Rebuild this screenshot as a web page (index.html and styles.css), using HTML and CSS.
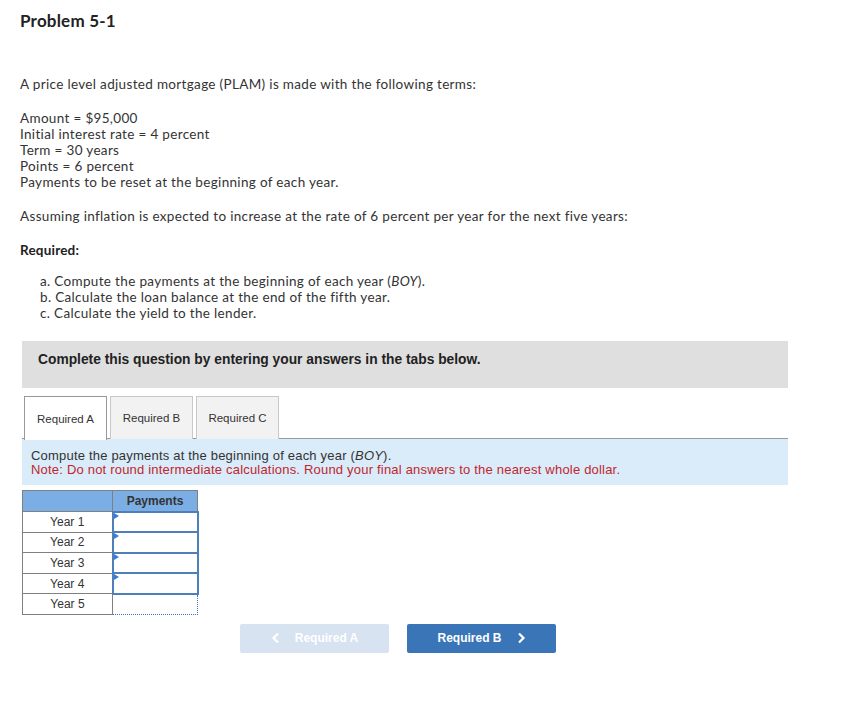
FILE: index.html
```html
<!DOCTYPE html>
<html lang="en">
<head>
  <meta charset="UTF-8" />
  <title>Problem 5-1</title>
  <link rel="stylesheet" href="styles.css">
</head>
<body>

<div class="page">
  <h1 class="title">Problem 5-1</h1>

  <p class="text">A price level adjusted mortgage (PLAM) is made with the following terms:</p>
  <p class="text">
    Amount = $95,000<br>
    Initial interest rate = 4 percent<br>
    Term = 30 years<br>
    Points = 6 percent<br>
    Payments to be reset at the beginning of each year.
  </p>
  <p class="text">Assuming inflation is expected to increase at the rate of 6 percent per year for the next five years:</p>
  <p class="text req">Required:</p>
  <div class="text parts">
    <div>a. Compute the payments at the beginning of each year (<i>BOY</i>).</div>
    <div>b. Calculate the loan balance at the end of the fifth year.</div>
    <div>c. Calculate the yield to the lender.</div>
  </div>

  <!-- Answer area -->
  <div class="complete">Complete this question by entering your answers in the tabs below.</div>

  <div class="tabs">
    <div class="tab active">Required A</div>
    <div class="tab">Required B</div>
    <div class="tab">Required C</div>
  </div>

  <div class="info">
    <div>Compute the payments at the beginning of each year (<i>BOY</i>).</div>
    <div class="note">Note: Do not round intermediate calculations. Round your final answers to the nearest whole dollar.</div>
  </div>

  <table class="answers">
    <tr><th></th><th>Payments</th></tr>
    <tr><td>Year 1</td><td class="input"></td></tr>
    <tr><td>Year 2</td><td class="input"></td></tr>
    <tr><td>Year 3</td><td class="input"></td></tr>
    <tr><td>Year 4</td><td class="input"></td></tr>
    <tr><td>Year 5</td><td class="dotted"></td></tr>
  </table>

  <div class="nav">
    <button class="nav-btn disabled">
      <svg width="10" height="12" viewBox="0 0 10 12"><path d="M7 1.5 L2.5 6 L7 10.5" fill="none" stroke="#fff" stroke-width="2.2"/></svg>
      <span>Required A</span>
    </button>
    <button class="nav-btn">
      <span>Required B</span>
      <svg width="10" height="12" viewBox="0 0 10 12"><path d="M3 1.5 L7.5 6 L3 10.5" fill="none" stroke="#fff" stroke-width="2.2"/></svg>
    </button>
  </div>
</div>

</body>
</html>
```

FILE: styles.css
```css
* { margin: 0; padding: 0; box-sizing: border-box; }
body {
  font-family: 'Lato', 'Liberation Sans', sans-serif;
  color: #333;
  background: #fff;
}
.page {
  padding: 0 20px;
}
.title {
  font-size: 17px;
  font-weight: bold;
  color: #222;
  line-height: 20px;
  padding-top: 11px;
  letter-spacing: 0.2px;
}
.text {
  font-size: 13.5px;
  line-height: 16px;
  margin-top: 18px;
  letter-spacing: 0.33px;
}
.title + .text { margin-top: 45px; }
.req { font-weight: bold; color: #222; letter-spacing: 0.2px; }
.parts { padding-left: 20px; margin-top: 15px; }

.complete {
  margin: 20px 0 0 2px;
  width: 766px;
  height: 47px;
  background: #dfdfdf;
  padding: 11px 16px;
  font-family: 'Liberation Sans', sans-serif;
  font-size: 13.8px;
  font-weight: bold;
  color: #222;
}
.tabs {
  display: flex;
  gap: 3px;
  margin: 8px 0 0 2px;
  width: 766px;
  padding-left: 2px;
  border-bottom: 1px solid #999;
  height: 43px;
}
.tab {
  width: 83px;
  height: 43px;
  border: 1px solid #c8c8c8;
  border-bottom: none;
  background: #f2f2f2;
  font-family: 'Liberation Sans', sans-serif;
  font-size: 11.5px;
  color: #333;
  display: flex;
  align-items: center;
  justify-content: center;
}
.tab.active {
  background: #fff;
  border-color: #999;
  height: 44px;
  position: relative;
  z-index: 1;
}
.info {
  margin-left: 2px;
  width: 766px;
  height: 46px;
  background: #daebf9;
  padding: 10px 9px 0;
  font-family: 'Liberation Sans', sans-serif;
  font-size: 13px;
  line-height: 14px;
  letter-spacing: 0.2px;
  color: #333;
}
.note { color: #c0272d; }

.answers {
  margin: 5px 0 0 2px;
  border-collapse: collapse;
  font-family: 'Liberation Sans', sans-serif;
  font-size: 12px;
  color: #333;
}
.answers th, .answers td {
  border: 1px solid #808080;
  height: 20.6px;
  text-align: center;
  padding: 0;
}
.answers th {
  height: 21px;
  background: #7aaee4;
  font-weight: bold;
  color: #333;
}
.answers th:first-child, .answers td:first-child { width: 90px; }
.answers th:last-child, .answers td:last-child { width: 85px; }
.answers td.input {
  border: 2px solid #4d7fba;
  position: relative;
}
.answers td.input::before {
  content: "";
  position: absolute;
  top: 0; left: 0;
  border-top: 3px solid transparent;
  border-bottom: 3px solid transparent;
  border-left: 5px solid #3b7bd4;
}
.answers td.dotted {
  border: 1px dotted #3a74c4;
}

.nav {
  display: flex;
  gap: 18px;
  margin: 9px 0 0 220px;
}
.nav-btn {
  width: 149px;
  height: 29px;
  border: none;
  border-radius: 2px;
  background: #3a75b8;
  color: #fff;
  font-family: 'Liberation Sans', sans-serif;
  font-size: 12px;
  font-weight: bold;
  display: flex;
  align-items: center;
  justify-content: center;
  gap: 14px;
}
.nav-btn.disabled {
  background: #d7e3f0;
}
```
